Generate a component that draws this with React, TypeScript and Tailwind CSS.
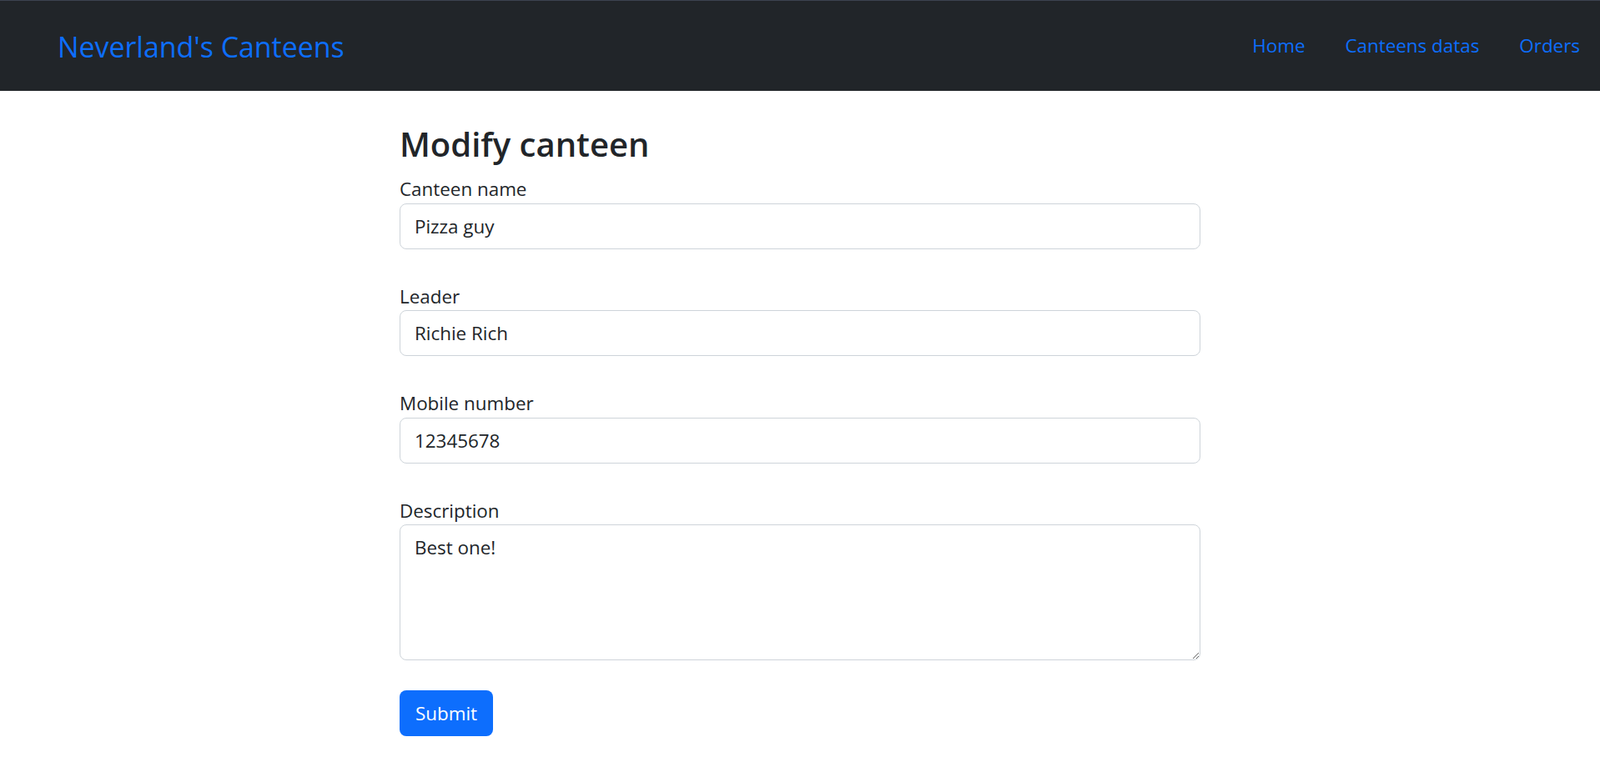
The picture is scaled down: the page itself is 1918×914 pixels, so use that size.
const fields = [
  { label: "Canteen name", value: "Pizza guy" },
  { label: "Leader", value: "Richie Rich" },
  { label: "Mobile number", value: "12345678" },
];

const navLinks = ["Home", "Canteens datas", "Orders"];

export default function App() {
  return (
    <div className="min-h-screen bg-white font-['Open_Sans',sans-serif] text-[#212529]">
      <nav className="flex h-[109px] items-center justify-between border-t border-[#3c4350] bg-[#212529] pl-[69px]">
        <a href="#" className="pt-[2px] text-[33.9px] leading-[1.5] text-[#0d6efd]">
          Neverland's Canteens
        </a>
        <ul className="flex">
          {navLinks.map((link) => (
            <li key={link}>
              <a href="#" className="block px-[24px] text-[22.4px] leading-[1.5] text-[#0d6efd]">
                {link}
              </a>
            </li>
          ))}
        </ul>
      </nav>

      <main className="mx-auto w-[960px] pt-[40px]">
        <h2 className="mb-[13px] text-[40px] font-semibold leading-[1.2]">Modify canteen</h2>
        <form onSubmit={(e) => e.preventDefault()}>
          {fields.map((field) => (
            <div key={field.label} className="mb-[40px]">
              <label className="block text-[22.4px] leading-[1.5]">{field.label}</label>
              <input
                defaultValue={field.value}
                className="block h-[55px] w-full rounded-[8px] border border-[#ced4da] px-[17px] text-[22.4px] leading-[1.5] text-[#212529] outline-none"
              />
            </div>
          ))}
          <div className="mb-[36px]">
            <label className="block text-[22.4px] leading-[1.5]">Description</label>
            <textarea
              defaultValue="Best one!"
              className="block h-[163px] w-full rounded-[8px] border border-[#ced4da] px-[17px] py-[9.7px] text-[22.4px] leading-[1.5] text-[#212529] outline-none"
            />
          </div>
          <button
            type="submit"
            className="h-[55px] rounded-[8px] bg-[#0d6efd] px-[19px] text-[22.4px] leading-[1.5] text-white"
          >
            Submit
          </button>
        </form>
      </main>
    </div>
  );
}
